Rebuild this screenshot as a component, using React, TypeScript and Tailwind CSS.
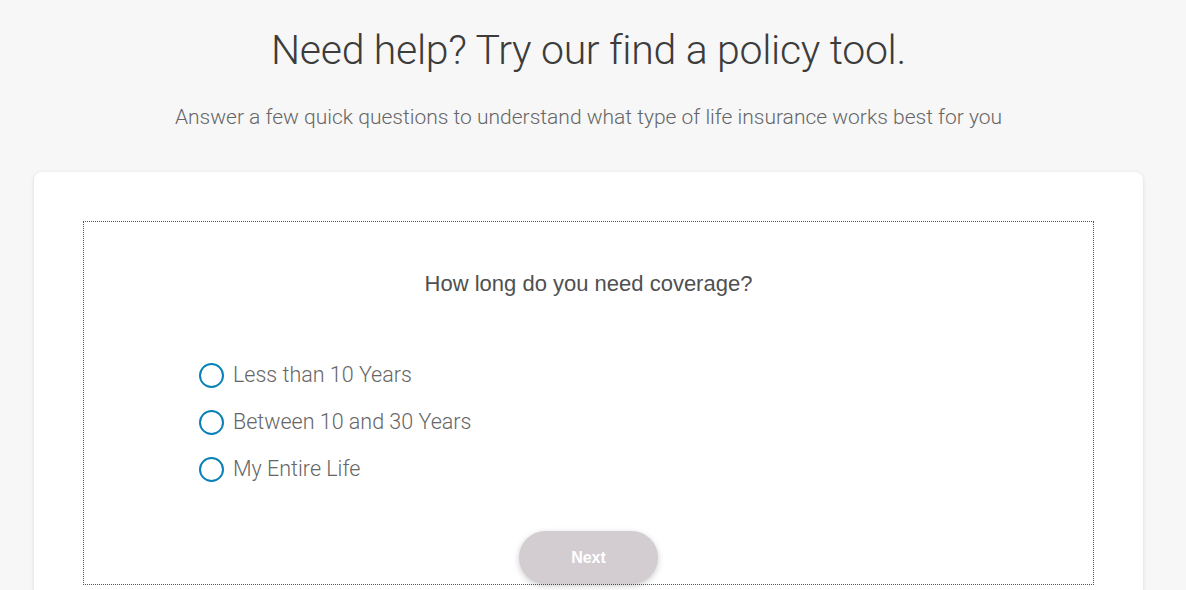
import React from "react";

const options = ["Less than 10 Years", "Between 10 and 30 Years", "My Entire Life"];

export default function App() {
  return (
    <div className="min-h-screen bg-[#f7f7f7]" style={{ fontFamily: "Roboto, 'Liberation Sans', sans-serif" }}>
      <div className="w-[1177px] flex flex-col items-center">
        <h1 className="mt-[24px] text-[41px] leading-[52px] font-light text-[#3c3c3c] tracking-[-0.3px]">
          Need help? Try our find a policy tool.
        </h1>
        <p className="mt-[28px] text-[21px] leading-[26px] font-light text-[#666]">
          Answer a few quick questions to understand what type of life insurance works best for you
        </p>
        <div className="mt-[42px] w-[1109px] bg-white rounded-[8px] shadow-[0_1px_4px_rgba(0,0,0,0.12)] p-[49px]">
          <div className="border border-dotted border-[#555] h-[364px] flex flex-col items-center">
            <h2 className="mt-[49px] text-[22px] leading-[26px] text-[#505050] font-['Liberation_Sans',sans-serif]">
              How long do you need coverage?
            </h2>
            <div className="self-start ml-[115px] mt-[65px] flex flex-col gap-[21px]">
              {options.map((o) => (
                <label key={o} className="flex items-center gap-[9px] cursor-pointer">
                  <span className="w-[25px] h-[25px] rounded-full border-2 border-[#0a80b8]" />
                  <span className="text-[21.5px] leading-[26px] font-light text-[#666]">{o}</span>
                </label>
              ))}
            </div>
            <button className="mt-[49px] w-[139px] h-[54px] rounded-full bg-[#d3cdd1] text-white font-bold text-[16px] shadow-[0_2px_6px_rgba(0,0,0,0.2)] font-['Liberation_Sans',sans-serif]">
              Next
            </button>
          </div>
        </div>
      </div>
    </div>
  );
}
